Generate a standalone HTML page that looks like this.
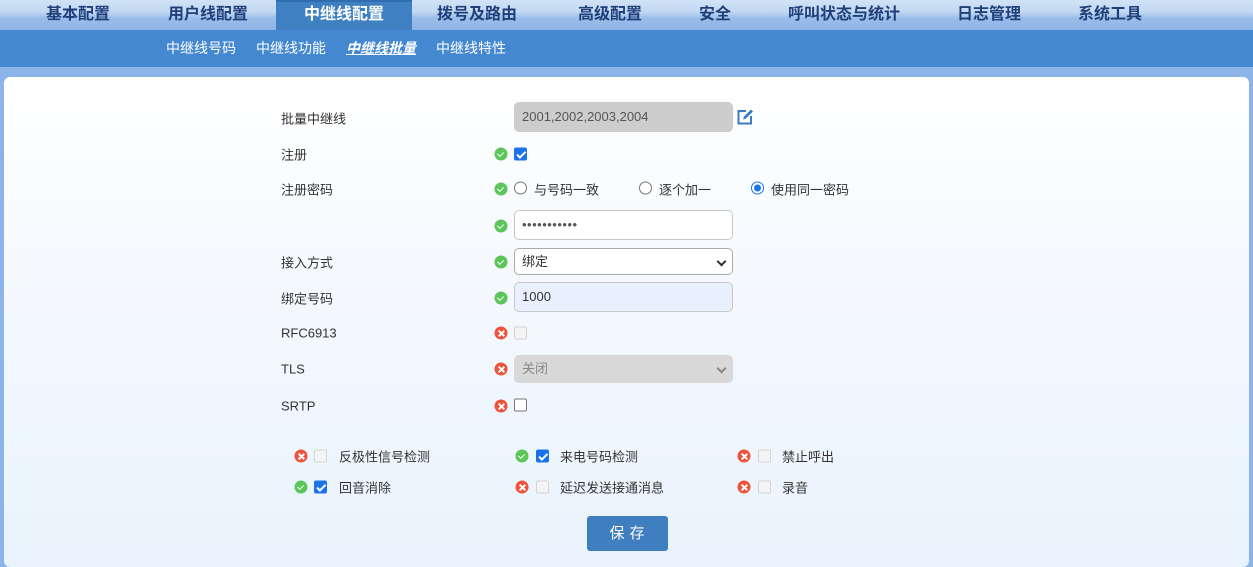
<!DOCTYPE html>
<html><head><meta charset="utf-8"><style>
*{margin:0;padding:0;box-sizing:border-box}
body{width:1253px;height:557px;overflow:hidden;background:#8db4e8;font-family:"Liberation Sans","Noto Sans CJK SC",sans-serif;position:relative}
.top{position:absolute;left:0;top:0;width:1253px;height:30px;background:linear-gradient(#d0e2f6 0%,#c2d8f2 40%,#9bbdea 60%,#8db4e6 100%)}
.top span{position:absolute;top:0;height:30px;line-height:30px;font-size:16px;font-weight:bold;color:#1f3f7a;transform:translateX(-50%);white-space:nowrap}
.act{position:absolute;left:276px;top:0;width:136px;height:30px;background:#3f80c2;border-top:2px solid #2f6db0}
.sub{position:absolute;left:0;top:30px;width:1253px;height:37px;background:#4388d0}
.sub span{position:absolute;top:0;line-height:36px;font-size:14px;color:#fff}
.panel{position:absolute;left:4px;top:77px;width:1245px;height:490px;border-radius:6px;background:linear-gradient(#fff 0%,#f5f9fe 40%,#e9f3fd 100%)}
.l{position:absolute;left:281px;font-size:13px;color:#333;transform:translateY(-50%)}
.t{position:absolute;font-size:13px;color:#333;transform:translateY(-50%);white-space:nowrap}
.ic{position:absolute;width:13px;height:13px;border-radius:50%;transform:translate(-50%,-50%)}
.ok{background:#5cc65a}
.ok:after{content:"";position:absolute;left:4px;top:3px;width:3px;height:5px;border:solid #fff;border-width:0 1.5px 1.5px 0;transform:rotate(45deg)}
.er{background:#f0533c}
.er:before,.er:after{content:"";position:absolute;left:6px;top:2.5px;width:1.6px;height:8px;background:#fff;transform:rotate(45deg)}
.er:after{transform:rotate(-45deg)}
.cb{position:absolute;width:13px;height:13px;border-radius:2px;transform:translateY(-50%);border:1px solid #767676;background:#fff}
.cb.on{background:#1a73e8;border-color:#1a73e8}
.cb.on:after{content:"";position:absolute;left:3.5px;top:1px;width:3px;height:6.5px;border:solid #fff;border-width:0 2px 2px 0;transform:rotate(45deg)}
.cb.dis{border-color:#d4d4d4;background:#f4f4f4}
.rd{position:absolute;width:13px;height:13px;border-radius:50%;border:1px solid #767676;background:#fff;transform:translateY(-50%)}
.rd.on{border:1px solid #1a73e8}
.rd.on:after{content:"";position:absolute;left:2px;top:2px;width:7px;height:7px;border-radius:50%;background:#1a73e8}
.in{position:absolute;left:514px;width:219px;height:30px;border:1px solid #c8c8c8;border-radius:5px;background:#fff;font-size:13px;color:#333;line-height:28px;padding-left:7px}
.chev{position:absolute;right:7px;top:9px;width:7px;height:7px;border:solid #333;border-width:0 2px 2px 0;transform:rotate(45deg)}
.btn{position:absolute;left:587px;top:516px;width:81px;height:35px;background:#3f7fc0;border-radius:3px;color:#fff;font-size:15px;text-align:center;line-height:35px;letter-spacing:5px;padding-left:4px}
</style></head><body>
<div class="top">
<div class="act"></div>
<span style="left:78px">基本配置</span>
<span style="left:208px">用户线配置</span>
<span style="left:344px;color:#fff">中继线配置</span>
<span style="left:477px">拨号及路由</span>
<span style="left:610px">高级配置</span>
<span style="left:715px">安全</span>
<span style="left:844px">呼叫状态与统计</span>
<span style="left:989px">日志管理</span>
<span style="left:1110px">系统工具</span>
</div>
<div class="sub">
<span style="left:166px">中继线号码</span>
<span style="left:256px">中继线功能</span>
<span style="left:346px;font-weight:bold;font-style:italic;text-decoration:underline">中继线批量</span>
<span style="left:436px">中继线特性</span>
</div>
<div class="panel"></div>

<div class="l" style="top:118px">批量中继线</div>
<div class="in" style="top:102px;background:#cdcdcd;border-color:#cdcdcd;color:#555">2001,2002,2003,2004</div>
<svg style="position:absolute;left:737px;top:109px" width="16" height="16" viewBox="0 0 16 16"><path d="M9 2H1.5v12.5H14V7" fill="none" stroke="#3a7cc4" stroke-width="2"/><path d="M6 10.5l1-3 7-7 2 2-7 7z" fill="#3a7cc4"/></svg>

<div class="l" style="top:154px">注册</div>
<div class="ic ok" style="left:501px;top:154px"></div>
<div class="cb on" style="left:514px;top:154px"></div>

<div class="l" style="top:189px">注册密码</div>
<div class="ic ok" style="left:501px;top:189px"></div>
<div class="rd" style="left:514px;top:188px"></div><div class="t" style="left:534px;top:189px">与号码一致</div>
<div class="rd" style="left:639px;top:188px"></div><div class="t" style="left:659px;top:189px">逐个加一</div>
<div class="rd on" style="left:751px;top:188px"></div><div class="t" style="left:771px;top:189px">使用同一密码</div>

<div class="ic ok" style="left:501px;top:226px"></div>
<div class="in" style="top:210px;letter-spacing:0.5px;color:#555">•••••••••••</div>

<div class="l" style="top:262px">接入方式</div>
<div class="ic ok" style="left:501px;top:262px"></div>
<div class="in" style="top:248px;height:27px;line-height:25px;border-color:#aaa">绑定<div class="chev"></div></div>

<div class="l" style="top:298px">绑定号码</div>
<div class="ic ok" style="left:501px;top:298px"></div>
<div class="in" style="top:282px;background:#e8f0fe">1000</div>

<div class="l" style="top:333px">RFC6913</div>
<div class="ic er" style="left:501px;top:333px"></div>
<div class="cb dis" style="left:514px;top:333px"></div>

<div class="l" style="top:369px">TLS</div>
<div class="ic er" style="left:501px;top:369px"></div>
<div class="in" style="top:355px;height:28px;line-height:26px;background:#d8d8d8;border-color:#d8d8d8;color:#888">关闭<div class="chev" style="border-color:#888"></div></div>

<div class="l" style="top:406px">SRTP</div>
<div class="ic er" style="left:501px;top:406px"></div>
<div class="cb" style="left:514px;top:405px"></div>

<div class="ic er" style="left:301px;top:456px"></div><div class="cb dis" style="left:314px;top:456px"></div><div class="t" style="left:339px;top:456px">反极性信号检测</div>
<div class="ic ok" style="left:522px;top:456px"></div><div class="cb on" style="left:536px;top:456px"></div><div class="t" style="left:560px;top:456px">来电号码检测</div>
<div class="ic er" style="left:744px;top:456px"></div><div class="cb dis" style="left:758px;top:456px"></div><div class="t" style="left:782px;top:456px">禁止呼出</div>

<div class="ic ok" style="left:301px;top:487px"></div><div class="cb on" style="left:314px;top:487px"></div><div class="t" style="left:339px;top:487px">回音消除</div>
<div class="ic er" style="left:522px;top:487px"></div><div class="cb dis" style="left:536px;top:487px"></div><div class="t" style="left:560px;top:487px">延迟发送接通消息</div>
<div class="ic er" style="left:744px;top:487px"></div><div class="cb dis" style="left:758px;top:487px"></div><div class="t" style="left:782px;top:487px">录音</div>

<div class="btn">保存</div>
</body></html>
